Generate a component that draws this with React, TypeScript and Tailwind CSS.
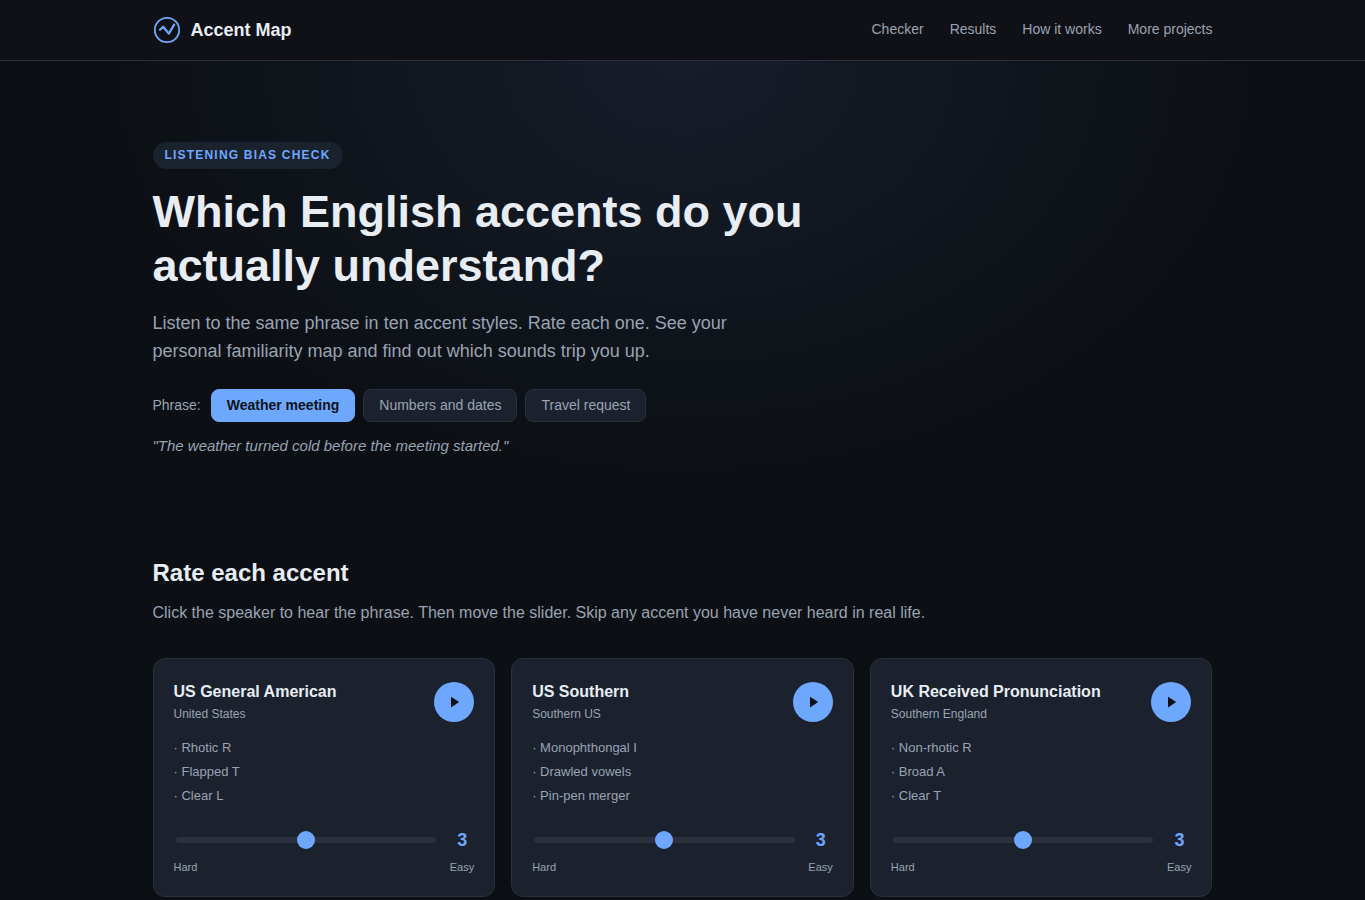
import {useState} from "react";

const NAV_LINKS = [
  {label: "Checker", href: "#checker"},
  {label: "Results", href: "#results"},
  {label: "How it works", href: "#how"},
  {label: "More projects", href: "#projects"},
];

const PHRASES = [
  {
    label: "Weather meeting",
    text: "The weather turned cold before the meeting started.",
  },
  {
    label: "Numbers and dates",
    text: "She paid forty-three dollars on the thirteenth of March.",
  },
  {
    label: "Travel request",
    text: "Could you tell me which platform the airport train leaves from?",
  },
];

type Accent = {
  id: string;
  name: string;
  region: string;
  features: string[];
};

const ACCENTS: Accent[] = [
  {
    id: "us-general",
    name: "US General American",
    region: "United States",
    features: ["Rhotic R", "Flapped T", "Clear L"],
  },
  {
    id: "us-southern",
    name: "US Southern",
    region: "Southern US",
    features: ["Monophthongal I", "Drawled vowels", "Pin-pen merger"],
  },
  {
    id: "uk-rp",
    name: "UK Received Pronunciation",
    region: "Southern England",
    features: ["Non-rhotic R", "Broad A", "Clear T"],
  },
];

function Logo() {
  return (
    <svg width="28" height="28" viewBox="0 0 28 28" fill="none" aria-hidden="true">
      <circle cx="14" cy="14" r="12.2" stroke="#6ea8fe" strokeWidth="1.8" />
      <path
        d="M7 13.8L10.2 10.8L15.8 17.6L21.2 8.6"
        stroke="#6ea8fe"
        strokeWidth="2.2"
        strokeLinecap="round"
        strokeLinejoin="round"
      />
    </svg>
  );
}

function Header() {
  return (
    <header className="border-b border-[#2a303c] bg-[#0f1116]">
      <div className="mx-auto flex h-15 max-w-[1100px] items-center justify-between px-5">
        <a href="#" className="flex items-center gap-2.5 text-lg font-bold text-[#e8edf4]">
          <Logo />
          Accent Map
        </a>
        <nav className="flex gap-[26px] pb-0.5 text-[14px] text-[#9aa3b2]">
          {NAV_LINKS.map((link) => (
            <a key={link.href} href={link.href} className="hover:text-[#e8edf4]">
              {link.label}
            </a>
          ))}
        </nav>
      </div>
    </header>
  );
}

function AccentCard({accent}: {accent: Accent}) {
  const [score, setScore] = useState(3);
  const sliderId = `score-${accent.id}`;

  return (
    <article className="rounded-xl border border-[#2a303c] bg-[#1b222e] p-5">
      <div className="mb-3 flex items-center justify-between gap-3">
        <div>
          <h3 className="text-base leading-[26px] font-bold text-[#e8edf4]">{accent.name}</h3>
          <p className="text-xs leading-[19px]">{accent.region}</p>
        </div>
        <button
          type="button"
          aria-label={`Play ${accent.name}`}
          className="flex size-10 shrink-0 items-center justify-center rounded-full bg-[#6ea8fe] text-[#0d1117]"
        >
          <svg width="16" height="16" viewBox="0 0 16 16" fill="currentColor" aria-hidden="true">
            <path d="M5 2.8v10.6l8.2-5.3z" />
          </svg>
        </button>
      </div>

      <ul className="mb-[18px] text-[13px] leading-5">
        {accent.features.map((feature) => (
          <li key={feature} className="py-0.5">
            · {feature}
          </li>
        ))}
      </ul>

      <div className="flex items-center gap-3">
        <input
          id={sliderId}
          type="range"
          min={1}
          max={5}
          value={score}
          aria-label={`${accent.name} score`}
          onChange={(e) => setScore(Number(e.target.value))}
          className="m-0.5 h-1.5 min-w-0 flex-1 cursor-pointer appearance-none rounded-[3px] bg-[#2a303c] [&::-webkit-slider-thumb]:size-4.5 [&::-webkit-slider-thumb]:appearance-none [&::-webkit-slider-thumb]:rounded-full [&::-webkit-slider-thumb]:bg-[#6ea8fe]"
        />
        <output htmlFor={sliderId} className="w-6 text-center text-lg font-bold text-[#6ea8fe]">
          {score}
        </output>
      </div>
      <div className="mt-1 flex justify-between text-[11px] leading-[18px]">
        <span>Hard</span>
        <span>Easy</span>
      </div>
    </article>
  );
}

export default function App() {
  const [phrase, setPhrase] = useState(0);

  return (
    <div className="min-h-screen bg-[#0c1015] font-['Liberation_Sans',Arial,sans-serif] text-[#9aa3b2]">
      <Header />
      <main>
        <section className="bg-[radial-gradient(ellipse_at_top,#161d29_0%,transparent_60%)] pt-[81px] pb-24">
          <div className="mx-auto max-w-[1100px] px-5">
            <span className="inline-block rounded-full bg-[#1a222e] px-3 py-1 text-xs leading-[19px] font-bold tracking-widest text-[#6ea8fe] uppercase">
              Listening bias check
            </span>
            <h1 className="mt-4 max-w-[720px] text-[45px] leading-[54px] font-bold text-[#e8edf4]">
              Which English accents do you actually understand?
            </h1>
            <p className="mt-4 max-w-[600px] text-lg leading-7">
              Listen to the same phrase in ten accent styles. Rate each one. See your personal
              familiarity map and find out which sounds trip you up.
            </p>

            <div className="mt-6 flex flex-wrap items-center gap-2">
              <span className="mr-0.5 text-[14px]">Phrase:</span>
              {PHRASES.map((item, i) => (
                <button
                  key={item.label}
                  type="button"
                  aria-pressed={i === phrase}
                  onClick={() => setPhrase(i)}
                  className={
                    i === phrase
                      ? "rounded-lg border border-[#6ea8fe] bg-[#6ea8fe] px-[15px] py-1.5 text-[14px] leading-[19px] font-bold text-[#0d1117]"
                      : "rounded-lg border border-[#2a303c] bg-[#1b222e] px-[15px] py-1.5 text-[14px] leading-[19px]"
                  }
                >
                  {item.label}
                </button>
              ))}
            </div>
            <p className="mt-3 text-[15px] leading-6 italic">"{PHRASES[phrase].text}"</p>
          </div>
        </section>

        <section id="checker" className="mx-auto max-w-[1100px] px-5">
          <h2 className="text-2xl leading-[38px] font-bold text-[#e8edf4]">Rate each accent</h2>
          <p className="mt-2 text-base leading-[26px]">
            Click the speaker to hear the phrase. Then move the slider. Skip any accent you have
            never heard in real life.
          </p>
          <div className="mt-8 grid gap-4 md:grid-cols-2 lg:grid-cols-3">
            {ACCENTS.map((accent) => (
              <AccentCard key={accent.id} accent={accent} />
            ))}
          </div>
        </section>
      </main>
    </div>
  );
}
